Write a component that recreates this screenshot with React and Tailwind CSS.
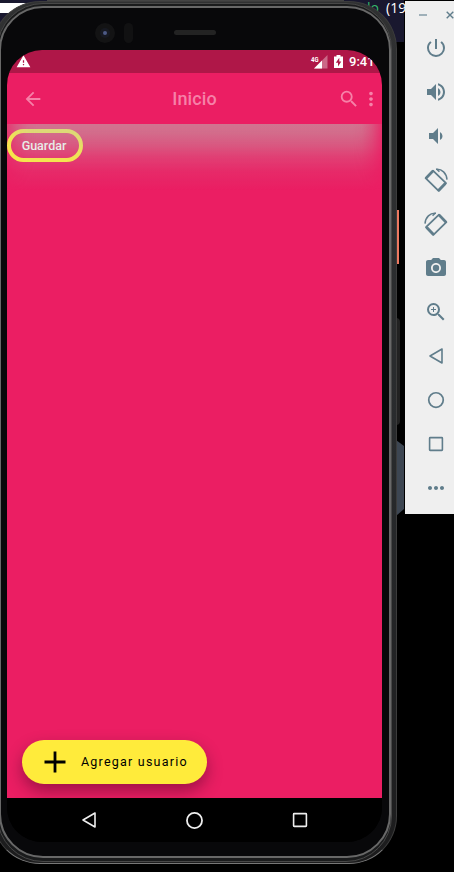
import React from "react";
import {
  MdPowerSettingsNew, MdVolumeUp, MdVolumeDown, MdCameraAlt, MdZoomIn, MdMoreHoriz,
  MdArrowBack, MdSearch, MdMoreVert, MdWarning,
} from "react-icons/md";

function Rotate({ flip }) {
  return (
    <svg viewBox="0 0 24 24" className={flip ? "size-6 -scale-x-100 overflow-visible" : "size-6 overflow-visible"} fill="none" stroke="currentColor">
      <path d="M9 2.6 L22 15.2 L14.6 22.8 L1.6 10.2 Z" strokeWidth="1.8" strokeLinejoin="round" />
      <path d="M8.6 3.4 L2.6 9.6 M21 15.8 L15 22" strokeWidth="2.8" strokeLinecap="round" />
      <path d="M12 1.3 C18 .6 22.6 5.4 23 11.6" strokeWidth="1.5" />
      <path d="M12.5 1 L15.4 3.8" strokeWidth="1.4" />
    </svg>
  );
}

function Triangle({ className }) {
  return (
    <svg viewBox="0 0 24 24" className={className} fill="none" stroke="currentColor" strokeWidth="1.6" strokeLinejoin="round">
      <path d="M18 5 V19 L6 12 Z" />
    </svg>
  );
}

function Circle({ className }) {
  return (
    <svg viewBox="0 0 24 24" className={className} fill="none" stroke="currentColor" strokeWidth="1.6">
      <circle cx="12" cy="12" r="6.7" />
    </svg>
  );
}

function Square({ className }) {
  return (
    <svg viewBox="0 0 24 24" className={className} fill="none" stroke="currentColor" strokeWidth="1.6">
      <rect x="5.6" y="5.6" width="12.8" height="12.8" rx=".6" />
    </svg>
  );
}

const tools = [
  <MdPowerSettingsNew className="size-6" />,
  <MdVolumeUp className="size-6" />,
  <MdVolumeDown className="size-6" />,
  <Rotate />,
  <Rotate flip />,
  <MdCameraAlt className="size-6" />,
  <MdZoomIn className="size-6" />,
  <Triangle className="size-6" />,
  <Circle className="size-[26px]" />,
  <Square className="size-6" />,
  <MdMoreHoriz className="size-6" />,
];

function Toolbar() {
  return (
    <aside className="absolute left-[405px] top-px h-[513px] w-[62px] bg-[#efefef] text-[#607d8b]">
      <div className="flex h-[25px] items-center pl-[14px] pt-[3px]">
        <span className="h-[2px] w-2 bg-[#9fb0b9]" />
        <svg viewBox="0 0 8 8" className="ml-[19px] size-2" stroke="currentColor" strokeWidth="1.4">
          <path d="M.7 .7 L7.3 7.3 M7.3 .7 L.7 7.3" />
        </svg>
      </div>
      <div className="flex flex-col">
        {tools.map((icon, i) => (
          <div key={i} className="flex h-11 w-[62px] items-center justify-center">{icon}</div>
        ))}
      </div>
    </aside>
  );
}

function Screen() {
  return (
    <main className="absolute left-[7px] top-[50px] flex h-[792px] w-[375px] flex-col overflow-hidden rounded-[35px] bg-black">
      <div className="flex h-[23px] shrink-0 items-center bg-[#af1748] pl-[9px] text-white">
        <MdWarning className="size-[15px]" />
        <div className="ml-auto flex h-full items-center">
          <svg viewBox="0 0 18 14" className="h-[14px] w-[18px]">
            <path d="M4 13.5 L17.5 0 V13.5Z" fill="#fff" opacity=".35" />
            <path d="M4 13.5 L12 5.5 V13.5Z" fill="#fff" />
            <text x="1" y="6.5" fontSize="8" fontWeight="700" fill="#fff" fontFamily="Roboto, sans-serif" textLength="7.5" lengthAdjust="spacingAndGlyphs">4G</text>
          </svg>
          <svg viewBox="0 0 9 13" className="ml-[6px] h-[13px] w-[9px]">
            <path d="M0 1.5 H2.5 V0 H6.5 V1.5 H9 V13 H0Z" fill="#fff" />
            <path d="M5.3 2.7 L1.8 7.8 H4 V11.6 L7.3 6.4 H5.3Z" fill="#af1748" />
          </svg>
          <span className="ml-[6px] w-[33px] whitespace-nowrap text-[13px] font-medium leading-none">9:41</span>
        </div>
      </div>
      <header className="relative flex h-[51px] shrink-0 items-center bg-[#eb1e63] text-[#f681a8]">
        <MdArrowBack className="ml-[15px] size-[22px]" />
        <h1 className="absolute inset-x-0 text-center text-[18px] font-medium leading-none tracking-[0.1px]">Inicio</h1>
        <MdSearch className="ml-auto size-[22px]" />
        <MdMoreVert className="size-[22px]" />
      </header>
      <section className="relative flex flex-1 flex-col overflow-hidden bg-[#eb1e63]">
        <button className="mt-[5px] flex h-[33px] w-[76px] items-center justify-center rounded-full border-4 border-[#ffeb3b] pr-[2px] pt-[2px] text-[12.5px] font-medium text-white">
          Guardar
        </button>
        <div className="pointer-events-none absolute inset-x-0 top-0 h-[66px] bg-[linear-gradient(to_bottom,rgba(184,197,185,0.52)_0%,rgba(184,197,185,0.46)_15%,rgba(184,197,185,0.35)_32%,rgba(184,197,185,0.2)_50%,rgba(184,197,185,0.07)_73%,transparent_100%)] [mask-image:linear-gradient(to_right,rgba(0,0,0,0.35)_0,rgba(0,0,0,0.7)_10px,rgba(0,0,0,0.94)_20px,#000_30px,#000_345px,rgba(0,0,0,0.94)_355px,rgba(0,0,0,0.65)_365px,rgba(0,0,0,0.2)_375px)]" />
        <button className="mb-[14px] ml-[15px] mt-auto flex h-11 w-[185px] items-center rounded-full bg-[#ffeb3b] pl-[22px] text-black shadow-[0_7px_16px_rgba(50,0,30,0.42)]">
          <svg viewBox="0 0 22 22" className="size-[22px]" stroke="currentColor" strokeWidth="2.8">
            <path d="M11 .5 V21.5 M.5 11 H21.5" />
          </svg>
          <span className="ml-[15px] whitespace-nowrap text-[12.5px] font-[450] tracking-[1.22px]">Agregar usuario</span>
        </button>
      </section>
      <nav className="flex h-11 shrink-0 items-center bg-black pl-[70px] text-[#eee]">
        <Triangle className="size-6" />
        <Circle className="ml-[80px] size-[27px]" />
        <Square className="ml-[80px] size-6" />
      </nav>
    </main>
  );
}

function Phone() {
  return (
    <div>
      <div className="absolute -left-[8px] top-px h-[863px] w-[405px] rounded-[48px] border border-[#3c3c3c] border-b-[#777] bg-gradient-to-b from-[#303132] via-[#292b2d] to-[#1c1c1d]" />
      <div className="absolute -left-[3px] top-[3px] h-[859px] w-[395px] rounded-[46px] border border-[#484848] bg-[#1a1b1c]" />
      <div className="absolute -left-px top-[6px] h-[852px] w-[392px] rounded-[44px] border-2 border-[#686868] bg-[#08080a]" />
      <div className="absolute left-[95px] top-[23px] flex size-5 items-center justify-center rounded-full bg-[#131314]">
        <span className="flex size-2.5 items-center justify-center rounded-full bg-[#171922]">
          <span className="size-1 rounded-full bg-[#4d5a86]" />
        </span>
      </div>
      <div className="absolute left-[124px] top-[23px] h-5 w-[9px] rounded-full bg-[#111112]" />
      <div className="absolute left-[174px] top-[30px] h-[5px] w-[42px] rounded-sm bg-[#232323]" />
      <Screen />
    </div>
  );
}

export default function App() {
  return (
    <div className="relative h-[872px] w-[454px] overflow-hidden bg-black font-['Roboto',sans-serif]">
      <div className="absolute left-0 top-0 h-[42px] w-[404px] bg-[#19182f]" />
      <div className="absolute left-0 top-[3px] h-[10px] w-[50px] bg-white" />
      <div className="absolute left-[47px] top-0 h-[3px] w-[297px] bg-[#444]" />
      <div className="absolute left-[362px] top-0 flex whitespace-nowrap font-['Open_Sans',sans-serif] text-[14px] leading-[16px] text-white">
        <span className="text-[#35b86b]">do</span>
        <span className="ml-[7px]">(19</span>
      </div>
      <div className="absolute left-[396px] top-[210px] h-[54px] w-[3px] bg-[#ed7860]" />
      <div className="absolute left-[396px] top-[318px] h-[107px] w-1 rounded-r-sm bg-[#222]" />
      <svg className="absolute left-[396px] top-[440px] h-[76px] w-2" viewBox="0 0 8 76">
        <path d="M0 0 L8 6 V69 L0 76Z" fill="#3d4652" />
      </svg>
      <Phone />
      <Toolbar />
    </div>
  );
}
